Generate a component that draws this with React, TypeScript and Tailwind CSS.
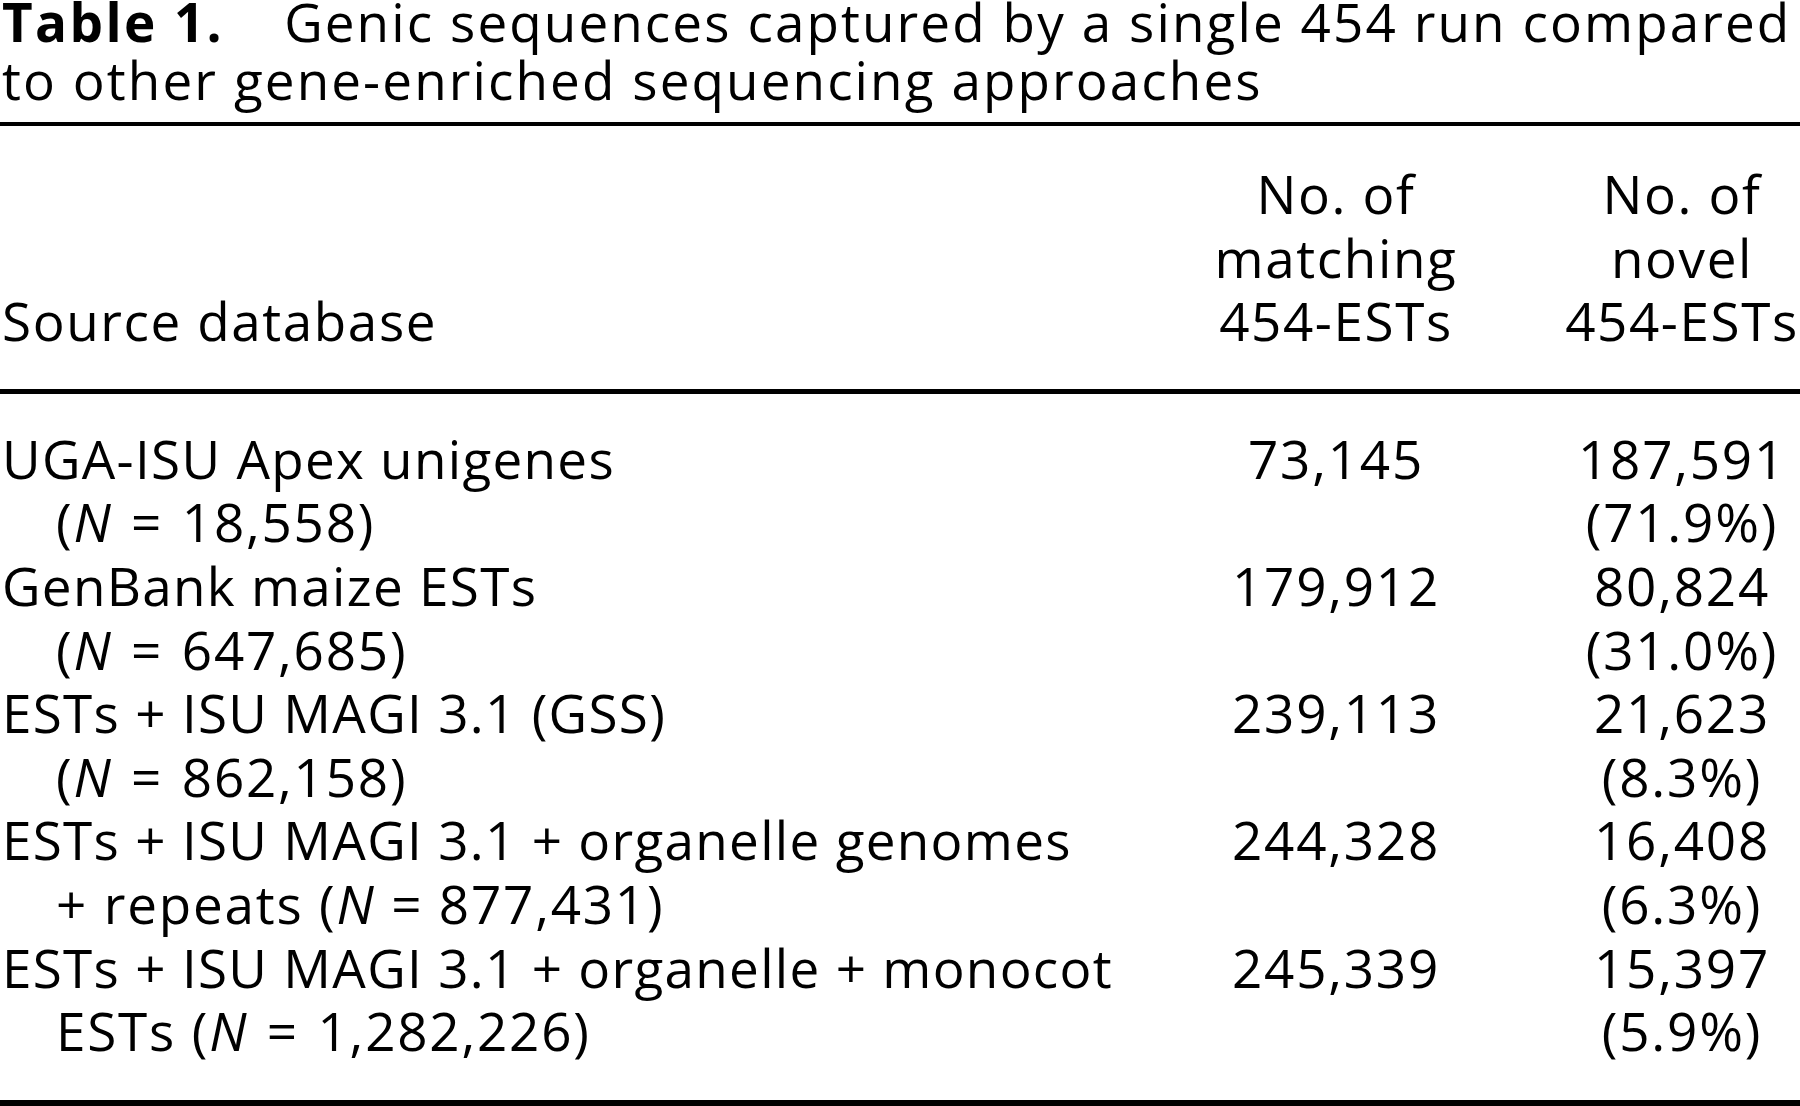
export default function App() {
  const eq = <span className="mx-[3px]">=</span>;
  const rows = [
    {
      first: "UGA-ISU Apex unigenes",
      second: (
        <>
          (<i>N</i> {eq} 18,558)
        </>
      ),
      matching: "73,145",
      novel: "187,591",
      pct: "(71.9%)",
    },
    {
      first: "GenBank maize ESTs",
      second: (
        <>
          (<i>N</i> {eq} 647,685)
        </>
      ),
      matching: "179,912",
      novel: "80,824",
      pct: "(31.0%)",
    },
    {
      first: "ESTs + ISU MAGI 3.1 (GSS)",
      second: (
        <>
          (<i>N</i> {eq} 862,158)
        </>
      ),
      matching: "239,113",
      novel: "21,623",
      pct: "(8.3%)",
    },
    {
      first: "ESTs + ISU MAGI 3.1 + organelle genomes",
      second: (
        <>
          + repeats (<i>N</i> = 877,431)
        </>
      ),
      matching: "244,328",
      novel: "16,408",
      pct: "(6.3%)",
    },
    {
      first: "ESTs + ISU MAGI 3.1 + organelle + monocot",
      second: (
        <>
          ESTs (<i>N</i> {eq} 1,282,226)
        </>
      ),
      matching: "245,339",
      novel: "15,397",
      pct: "(5.9%)",
    },
  ];

  return (
    <div className="w-[1800px] h-[1106px] overflow-hidden bg-white text-black font-['Open_Sans',sans-serif]">
      <h1 className="pl-[2px] text-[53px] font-medium tracking-[2.1px] whitespace-nowrap">
        <div className="leading-[44px]">
          <span className="font-bold tracking-[2.4px] mr-[60px]">Table 1.</span>
          Genic sequences captured by a single 454 run compared
        </div>
        <div className="leading-[71px]">to other gene-enriched sequencing approaches</div>
      </h1>
      <div className="mt-[7px] h-[4px] bg-black" />

      <div className="grid grid-cols-[minmax(0,1fr)_292px_236px] gap-x-[82px] pt-[36px] pb-[36px] text-[53px] leading-[63.6px] font-medium tracking-[1.6px]">
        <div className="flex items-end pl-[2px]">Source database</div>
        <div className="text-center">
          No. of
          <br />
          matching
          <br />
          454-ESTs
        </div>
        <div className="text-center">
          No. of
          <br />
          novel
          <br />
          454-ESTs
        </div>
      </div>
      <div className="h-[5px] bg-black" />

      <div className="pt-[33px] pb-[37px] text-[53px] leading-[63.6px] font-normal tracking-[1.8px]">
        {rows.map((r, i) => (
          <div key={i} className="grid grid-cols-[minmax(0,1fr)_292px_236px] gap-x-[82px]">
            <div className="pl-[2px] whitespace-nowrap">
              <div className="tracking-[1.3px]">{r.first}</div>
              <div className="pl-[54px]">{r.second}</div>
            </div>
            <div className="text-center">{r.matching}</div>
            <div className="text-center">
              {r.novel}
              <br />
              {r.pct}
            </div>
          </div>
        ))}
      </div>
      <div className="h-[6px] bg-black" />
    </div>
  );
}
